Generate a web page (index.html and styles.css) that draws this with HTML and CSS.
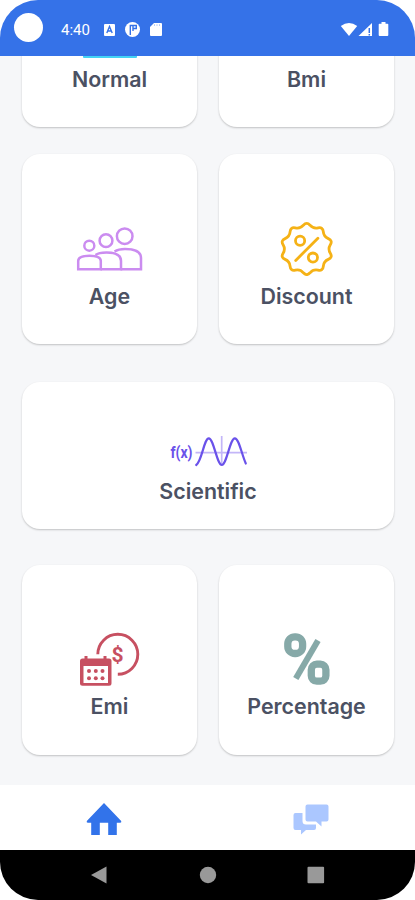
FILE: index.html
```html
<!DOCTYPE html>
<html lang="en">
  <head>
    <meta charset="UTF-8" />
    <meta name="viewport" content="width=device-width, initial-scale=1.0" />
    <title>Calculator</title>
    <link rel="stylesheet" href="styles.css">
  </head>
  <body>
    <div class="screen">
      <header class="status-bar">
        <div class="camera"></div>
        <div class="time">4:40</div>
        <svg class="status-left" width="60" height="20" viewBox="0 0 60 20">
          <rect x="1" y="4" width="11" height="12" rx="1" fill="#fff" />
          <path d="M3.8 13L6.5 6.5L9.2 13M5 11h3" fill="none" stroke="#3572e8" stroke-width="1.4" />
          <circle cx="29.5" cy="9.5" r="7.5" fill="#fff" />
          <path d="M27.3 15V5.500H30V11M30 5.500h3.300v3H30" fill="none" stroke="#3572e8" stroke-width="1.4" />
          <path d="M51 3h7q1 0 1 1v11q0 1-1 1h-10q-1 0-1-1V7z" fill="#fff" />
          <path d="M51.500 4.200v1.800M54 4.200v1.800M56.500 4.200v1.800" stroke="#b5cbf7" stroke-width="1" />
        </svg>
        <svg class="status-right" width="50" height="20" viewBox="0 0 50 20">
          <path d="M.8 6Q9 .2 17.200 6L9 16z" fill="#fff" />
          <path d="M32 3v13H18.500z" fill="#fff" />
          <path d="M29.300 8v5M29.300 14v1.500" stroke="#3572e8" stroke-width="1.500" />
          <path d="M41.500 2h4v1.800h2q.8 0 .8.8V15q0 1-1 1h-7.600q-1 0-1-1V4.600q0-.8.8-.8h2z" fill="#fff" />
        </svg>
      </header>

      <main class="content">
        <div class="grid">
          <div class="card">
            <svg class="icon" viewBox="0 0 80 60">
              <rect x="13" y="2" width="54" height="57" rx="1" fill="#43d3f5" />
            </svg>
            <div class="label">Normal</div>
          </div>

          <div class="card">
            <div class="label">Bmi</div>
          </div>

          <div class="card">
            <svg class="icon" viewBox="0 0 80 60" fill="none" stroke="#cb8cf0" stroke-width="2.500">
              <circle cx="19.300" cy="29.700" r="5" />
              <circle cx="36" cy="24.700" r="6.400" />
              <circle cx="54.700" cy="20.200" r="7.800" />
              <path d="M8.200 53.300V45q0-5.300 11.300-5.300T30.800 45v8.300z" />
              <path d="M25.500 39q3-2.600 11-2.600 14.500 0 14.500 8.600v8.300H30.500" />
              <path d="M44.500 35.500q4-2.500 10.500-2.500 16 0 16 9v11.300H50.500" />
            </svg>
            <div class="label">Age</div>
          </div>

          <div class="card">
            <svg class="icon" viewBox="0 0 80 60">
              <g transform="translate(39.700 33)" fill="none" stroke="#f5b216" stroke-width="2.800" stroke-linecap="round">
                <path d="M-3.300-23.800Q0-27.500 3.300-23.800Q6.500-20 11.400-21.100Q16.200-22.200 16.600-17.300Q17-12.300 21.600-10.400Q26.200-8.500 23.600-4.300Q21 0 23.600 4.300Q26.200 8.500 21.600 10.400Q17 12.300 16.600 17.300Q16.200 22.200 11.400 21.100Q6.500 20 3.300 23.800Q0 27.500-3.300 23.800Q-6.500 20-11.400 21.100Q-16.200 22.200-16.600 17.300Q-17 12.300-21.600 10.400Q-26.200 8.500-23.600 4.300Q-21 0-23.600-4.300Q-26.200-8.500-21.600-10.400Q-17-12.300-16.600-17.300Q-16.200-22.200-11.400-21.100Q-6.500-20-3.300-23.800z" />
                <circle cx="-6.600" cy="-8.300" r="4.600" />
                <circle cx="6.200" cy="8.600" r="4.600" />
                <path d="M-11 11.400L11.200-10.800" />
              </g>
            </svg>
            <div class="label">Discount</div>
          </div>

          <div class="card wide">
            <svg class="icon" viewBox="0 0 80 60">
              <path d="M27.500 41.700H79M53.700 25v29" stroke="#c3b6f8" stroke-width="1.700" fill="none" />
              <text class="fx" x="2.500" y="46.500" textLength="22" lengthAdjust="spacingAndGlyphs">f(x)</text>
              <path d="M28.200 54C34 50 36 27.300 40.800 27.300S49 54 53.800 54 62 27.300 66.800 27.300C71 27.300 73.500 43 77.800 52.500" fill="none" stroke="#6a52ea" stroke-width="2.200" stroke-linecap="round" />
            </svg>
            <div class="label">Scientific</div>
          </div>

          <div class="card low">
            <svg class="icon" viewBox="0 0 80 60">
              <path d="M27.800 28.300A20 20 0 1 1 47.800 48.300" fill="none" stroke="#c75061" stroke-width="2.900" />
              <text class="dollar" x="47.500" y="35.500">$</text>
              <path d="M12.500 32.500h2v-2.500h3v2.500h16v-2.500h3v2.500h2.500q2.500 0 2.500 2.500v22.200q0 2.500-2.500 2.500H12.500q-2.500 0-2.500-2.500V35q0-2.500 2.500-2.500z" fill="#c75061" />
              <rect x="13.500" y="40" width="24.500" height="17" fill="#fff" />
              <g fill="#c75061">
                <circle cx="19" cy="45" r="2" />
                <circle cx="25.800" cy="45" r="2" />
                <circle cx="32.500" cy="45" r="2" />
                <circle cx="19" cy="52.300" r="2" />
                <circle cx="25.800" cy="52.300" r="2" />
                <circle cx="32.500" cy="52.300" r="2" />
              </g>
            </svg>
            <div class="label">Emi</div>
          </div>

          <div class="card low">
            <svg class="icon" viewBox="0 0 80 60" fill="none" stroke="#86a9a8">
              <rect x="20.800" y="10.800" width="14.800" height="16.700" rx="7" stroke-width="7.300" />
              <rect x="44.300" y="38.200" width="14.600" height="17" rx="5.500" stroke-width="7.300" />
              <path d="M51 14.500L28.800 52.500" stroke-width="6" />
            </svg>
            <div class="label">Percentage</div>
          </div>
        </div>
      </main>

      <nav class="tabs">
        <a class="tab" href="#">
          <svg width="36" height="34" viewBox="0 0 36 34">
            <path d="M18 1L35.200 19q.6 1.700-1 1.700h-3.400V33h-8.600V20.700h-8.400V33H5.200V20.700H1.800q-1.600 0-1-1.700z" fill="#3273ea" />
          </svg>
        </a>
        <a class="tab" href="#">
          <svg width="36" height="34" viewBox="0 0 36 34" fill="#abc7ff">
            <path d="M14.500 2.500h19q2 0 2 2v13q0 2-2 2h-5v5L23 19.500h-8.500q-2 0-2-2v-13q0-2 2-2z" />
            <path d="M2.500 11H9.500v8q0 3.500 3.500 3.500h10V26q0 2-2 2h-8l-5 4.500V28H2.500q-2 0-2-2V13q0-2 2-2z" />
          </svg>
        </a>
      </nav>

      <footer class="system-bar">
        <svg width="18" height="18" viewBox="0 0 18 18"><path d="M0 9L15.500.5v17z" /></svg>
        <svg width="18" height="18" viewBox="0 0 18 18"><circle cx="9" cy="9" r="8.200" /></svg>
        <svg width="18" height="18" viewBox="0 0 18 18"><rect x=".5" y=".7" width="16.600" height="16.600" rx="1" /></svg>
      </footer>
    </div>
  </body>
</html>
```
FILE: styles.css
```css
body {
  margin: 0;
  background-color: #fff;
  font-family: Inter, Roboto, sans-serif;
}

.screen {
  display: flex;
  flex-direction: column;
  width: 415px;
  height: 900px;
  border-radius: 38px;
  overflow: hidden;
  background-color: #f6f7f9;
}

.status-bar {
  display: flex;
  align-items: center;
  flex: none;
  height: 56px;
  padding: 0 25px 0 14px;
  box-sizing: border-box;
  background-color: #3572e8;
}

.camera {
  width: 29px;
  height: 29px;
  margin-bottom: 2px;
  border-radius: 50%;
  background-color: #fff;
}

.time {
  width: 42px;
  margin: 4px 0 0 18px;
  color: #fff;
  font-family: Roboto, sans-serif;
  font-size: 15px;
}

.status-left {
  margin-top: 4px;
}

.status-right {
  margin: 4px 0 0 auto;
}

.content {
  flex: 1;
  min-height: 0;
  overflow: hidden;
}

/* scrolled down, the first row sits partly under the status bar */
.grid {
  display: grid;
  grid-template-columns: 1fr 1fr;
  gap: 27px 22px;
  margin: -119px 21px 0 22px;
}

.card {
  display: flex;
  flex-direction: column;
  align-items: center;
  justify-content: flex-end;
  height: 190px;
  padding-bottom: 33px;
  box-sizing: border-box;
  border-radius: 18px;
  background-color: #fff;
  box-shadow: 0 1px 2px rgba(0, 0, 0, 0.22);
}

.card.wide {
  grid-column: span 2;
  height: 147px;
  padding-bottom: 23px;
  margin: 11px 0 9px;
}

.card.low {
  padding-bottom: 34px;
}

.icon {
  width: 80px;
  height: 60px;
}

.label {
  margin-top: 5px;
  color: #4b5163;
  font-size: 21.4px;
  font-weight: 600;
  line-height: 30px;
}

.fx {
  fill: #6a52ea;
  font-family: Roboto, sans-serif;
  font-size: 16px;
  font-weight: 700;
}

.dollar {
  fill: #c75061;
  font-family: Roboto, sans-serif;
  font-size: 21px;
  font-weight: 700;
  text-anchor: middle;
}

.tabs {
  display: grid;
  grid-template-columns: 1fr 1fr;
  flex: none;
  height: 65px;
  padding-top: 2px;
  box-sizing: border-box;
  background-color: #fff;
}

.tab {
  display: flex;
  align-items: center;
  justify-content: center;
}

.system-bar {
  display: flex;
  align-items: center;
  justify-content: center;
  gap: 90px;
  flex: none;
  height: 50px;
  background-color: #000;
  fill: #999;
}
```
